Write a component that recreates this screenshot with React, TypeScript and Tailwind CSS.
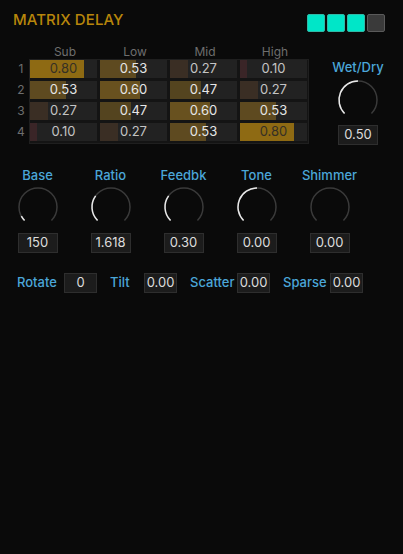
import React from "react";

const bands = ["Sub", "Low", "Mid", "High"];

const matrix = [
  [0.8, 0.53, 0.27, 0.1],
  [0.53, 0.6, 0.47, 0.27],
  [0.27, 0.47, 0.6, 0.53],
  [0.1, 0.27, 0.53, 0.8],
];

const fillColors: Record<string, string> = {
  "0.80": "#8e6a13",
  "0.60": "#68511f",
  "0.53": "#5e4a20",
  "0.47": "#54441f",
  "0.27": "#3a2e24",
  "0.10": "#3a2527",
};

const knobs = [
  { label: "Base", value: "150", amount: 0.06 },
  { label: "Ratio", value: "1.618", amount: 0.3 },
  { label: "Feedbk", value: "0.30", amount: 0.3 },
  { label: "Tone", value: "0.00", amount: 0.5 },
  { label: "Shimmer", value: "0.00", amount: 0 },
];

const extras = [
  { label: "Rotate", value: "0", width: "w-[47px]" },
  { label: "Tilt", value: "0.00", width: "w-[34px]" },
  { label: "Scatter", value: "0.00", width: "w-[47px]" },
  { label: "Sparse", value: "0.00", width: "w-[47px]" },
];

function polar(cx: number, cy: number, r: number, deg: number) {
  const a = (deg * Math.PI) / 180;
  return [cx + r * Math.cos(a), cy + r * Math.sin(a)];
}

function arc(cx: number, cy: number, r: number, from: number, to: number) {
  const [x1, y1] = polar(cx, cy, r, from);
  const [x2, y2] = polar(cx, cy, r, to);
  const large = to - from > 180 ? 1 : 0;
  return `M ${x1} ${y1} A ${r} ${r} 0 ${large} 1 ${x2} ${y2}`;
}

function Knob({ amount }: { amount: number }) {
  const start = 135;
  const end = 405;
  return (
    <svg width="44" height="44" viewBox="0 0 44 44">
      <path d={arc(22, 22, 19, start, end)} fill="none" stroke="#3a3a3a" strokeWidth="1.5" />
      {amount > 0 && (
        <path
          d={arc(22, 22, 19, start, start + 270 * amount)}
          fill="none"
          stroke="#e8e8e8"
          strokeWidth="1.5"
        />
      )}
    </svg>
  );
}

function ValueBox({ value, className }: { value: string; className: string }) {
  return (
    <div
      className={`${className} h-[20px] flex items-center justify-center bg-[#1c1c1c] border border-[#2e2e2e] text-[13px] text-[#dcdcdc]`}
    >
      {value}
    </div>
  );
}

export default function App() {
  return (
    <div
      className="w-[403px] h-[554px] bg-[#0a0a0a] overflow-hidden"
      style={{ fontFamily: "Inter, 'Noto Sans', sans-serif" }}
    >
      {/* Header */}
      <div className="flex items-start justify-between pt-[10px] pl-[13px] pr-[18px]">
        <h1 className="text-[15px] leading-[20px] font-medium text-[#b8860b] tracking-[0.1px]">
          MATRIX DELAY
        </h1>
        <div className="flex gap-[2px] mt-[4px]">
          <div className="w-[18px] h-[18px] rounded-[2px] bg-[#00e6c8] border border-[#30b8a6]" />
          <div className="w-[18px] h-[18px] rounded-[2px] bg-[#00e6c8] border border-[#30b8a6]" />
          <div className="w-[18px] h-[18px] rounded-[2px] bg-[#00e6c8] border border-[#30b8a6]" />
          <div className="w-[18px] h-[18px] rounded-[2px] bg-[#3a3a3a] border border-[#5a5a5a]" />
        </div>
      </div>

      {/* Matrix + wet/dry */}
      <div className="flex mt-[13px] pl-[13px]">
        <div>
          <div className="flex pl-[17px] h-[14px] text-[12px] leading-[14px] text-[#6e6e6e]">
            {bands.map((b) => (
              <div key={b} className="w-[70px] text-center">
                {b}
              </div>
            ))}
          </div>
          <div className="flex">
            <div className="w-[16px] flex flex-col gap-[3px] pt-[1px]">
              {matrix.map((_, i) => (
                <div
                  key={i}
                  className="h-[18px] flex items-center justify-center text-[12px] text-[#6e6e6e]"
                >
                  {i + 1}
                </div>
              ))}
            </div>
            <div className="w-[280px] bg-[#141414] border border-[#1f1f1f] pb-[2px] flex flex-col gap-[3px]">
              {matrix.map((row, i) => (
                <div key={i} className="flex gap-[3px]">
                  {row.map((v, j) => {
                    const key = v.toFixed(2);
                    return (
                      <div
                        key={j}
                        className="relative w-[67px] h-[18px] bg-[#222222] overflow-hidden"
                      >
                        <div
                          className="absolute left-0 top-0 bottom-0"
                          style={{ width: `${v * 100}%`, backgroundColor: fillColors[key] }}
                        />
                        <div
                          className={`relative h-full flex items-center justify-center text-[13px] ${
                            v >= 0.8
                              ? "text-[#353025]"
                              : v >= 0.4
                                ? "text-[#e6e6e6]"
                                : "text-[#c4c4c4]"
                          }`}
                        >
                          {key}
                        </div>
                      </div>
                    );
                  })}
                </div>
              ))}
            </div>
          </div>
        </div>

        <div className="ml-[23px] w-[50px] mt-[14px] flex flex-col items-center">
          <span className="text-[13px] leading-[16px] font-medium text-[#4ba6d8]">Wet/Dry</span>
          <div className="mt-[3px]">
            <Knob amount={0.5} />
          </div>
          <ValueBox value="0.50" className="w-[40px] mt-[3px]" />
        </div>
      </div>

      {/* Knobs */}
      <div className="flex mt-[22px] pl-[1px]">
        {knobs.map((k) => (
          <div key={k.label} className="w-[73px] flex flex-col items-center">
            <span className="text-[13px] leading-[16px] font-medium text-[#4ba6d8]">
              {k.label}
            </span>
            <div className="mt-[2px]">
              <Knob amount={k.amount} />
            </div>
            <ValueBox value={k.value} className="w-[40px] mt-[4px]" />
          </div>
        ))}
      </div>

      {/* Extra params */}
      <div className="flex items-center gap-[13px] mt-[20px] pl-[17px]">
        {extras.map((e) => (
          <div key={e.label} className="flex items-center">
            <span className={`${e.width} text-[13px] font-medium text-[#4ba6d8]`}>{e.label}</span>
            <ValueBox value={e.value} className="w-[33px]" />
          </div>
        ))}
      </div>
    </div>
  );
}
